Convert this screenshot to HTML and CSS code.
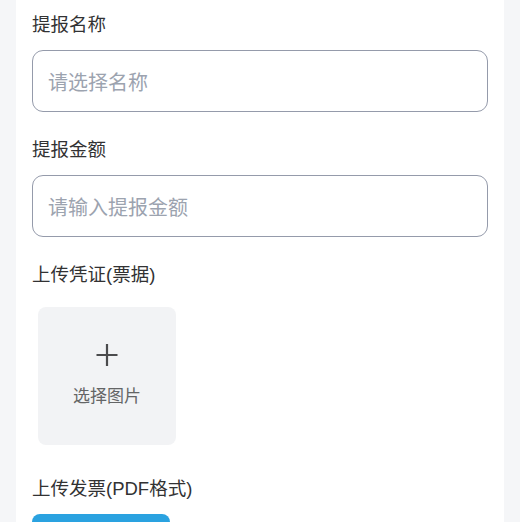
FILE: index.html
```html
<!DOCTYPE html>
<html lang="zh-CN">
<head>
<meta charset="utf-8">
<title>提报</title>
<link rel="stylesheet" href="styles.css">
</head>
<body>
<div class="page">
  <div class="panel">
    <div class="field">
      <div class="label">提报名称</div>
      <div class="input"><span class="placeholder">请选择名称</span></div>
    </div>
    <div class="field">
      <div class="label">提报金额</div>
      <div class="input"><span class="placeholder">请输入提报金额</span></div>
    </div>
    <div class="field">
      <div class="label">上传凭证(票据)</div>
      <div class="uploader">
        <div class="upload-box">
          <svg class="plus" width="24" height="24" viewBox="0 0 24 24"><path d="M12 1v22M1.5 12h21" stroke="#4b4b4d" stroke-width="2.2" fill="none"/></svg>
          <span class="upload-text">选择图片</span>
        </div>
      </div>
    </div>
    <div class="field">
      <div class="label">上传发票(PDF格式)</div>
      <button class="btn" type="button">上传文件</button>
    </div>
  </div>
</div>
</body>
</html>
```

FILE: styles.css
```css
html, body {
  margin: 0;
  padding: 0;
  overflow: hidden;
  height: 100%;
}
body {
  background: #f5f6f8;
  font-family: "Liberation Sans", "Noto Sans CJK SC", sans-serif;
  color: #323233;
}
.page {
  padding: 0 16px;
  height: 100%;
}
.panel {
  background: #ffffff;
  padding: 13px 16px 0;
  height: 100%;
  box-sizing: border-box;
}
.field {
  margin-bottom: 26px;
}
.label {
  font-size: 18.5px;
  line-height: 24px;
  margin-bottom: 13px;
}
.input {
  height: 62px;
  box-sizing: border-box;
  border: 1.6px solid #959bab;
  border-radius: 11px;
  display: flex;
  align-items: center;
  padding: 0 15px;
}
.placeholder {
  font-size: 20px;
  color: #9ca3af;
}
.uploader {
  padding: 7px 6px 5.5px;
}
.upload-box {
  width: 138px;
  height: 138px;
  background: #f2f3f5;
  border-radius: 8px;
  display: flex;
  flex-direction: column;
  align-items: center;
  justify-content: center;
}
.plus {
  margin-top: -2px;
}
.upload-text {
  margin-top: 20px;
  font-size: 17px;
  color: #646566;
  line-height: 20px;
}
.btn {
  display: block;
  width: 138px;
  height: 60px;
  border: none;
  border-radius: 8px;
  background: #2aa2e0;
  color: #fff;
  font-family: inherit;
  font-size: 17px;
}
```
